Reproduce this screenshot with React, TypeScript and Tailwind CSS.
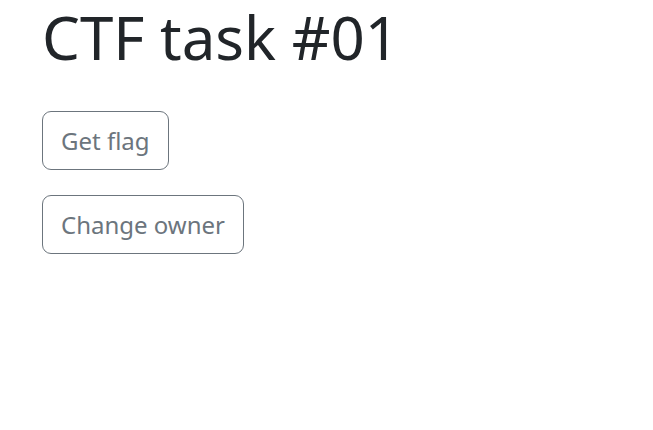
export default function App() {
  return (
    <div
      className="min-h-[430px] bg-white px-[42px] text-[#212529]"
      style={{ fontFamily: '"Noto Sans", "Open Sans", sans-serif' }}
    >
      {/* Title */}
      <h1 className="mb-[44px] pt-[7px] text-[60px] font-normal leading-[60px]">
        CTF task #01
      </h1>

      {/* Actions */}
      <div className="flex flex-col items-start gap-[25px]">
        <button className="rounded-[9px] border-[1.5px] border-[#6c757d] px-[18px] py-[9px] text-[24px] leading-[39px] text-[#6c757d]">
          Get flag
        </button>
        <button className="rounded-[9px] border-[1.5px] border-[#6c757d] px-[18px] py-[9px] text-[24px] leading-[39px] text-[#6c757d]">
          Change owner
        </button>
      </div>
    </div>
  );
}
